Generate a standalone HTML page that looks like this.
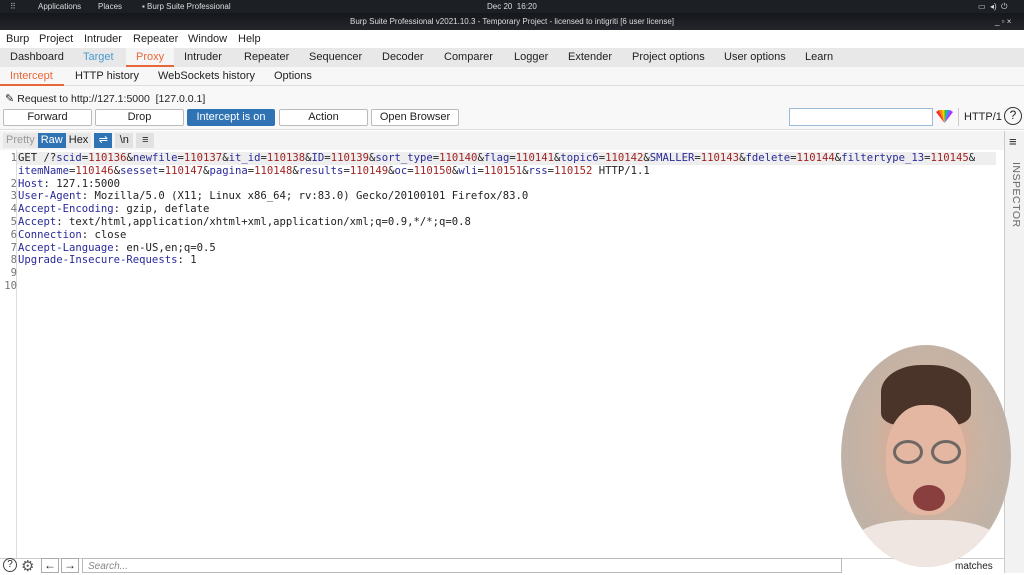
<!DOCTYPE html>
<html><head><style>
*{margin:0;padding:0;box-sizing:border-box}
body{width:1024px;height:573px;overflow:hidden;background:#fff;font-family:"Liberation Sans",sans-serif;position:relative;color:#222}
.a{position:absolute}
.top{left:0;top:0;width:1024px;height:13px;background:#1c1f24;color:#ddd;font-size:8px;line-height:13px}
.title{left:0;top:13px;width:1024px;height:17px;background:linear-gradient(#15171b,#23262b);color:#ddd;font-size:8px;line-height:17px;text-align:center}
.menu{top:31px;left:0;width:1024px;height:17px;font-size:11px;line-height:17px;background:#fff}
.menu span{position:absolute}
.tabs{top:48px;left:0;width:1024px;height:19px;background:#e8e8e8;font-size:11px;line-height:19px}
.tabs span{position:absolute}
.sub{top:67px;left:0;width:1024px;height:19px;background:#f7f7f7;font-size:11px;line-height:19px;border-bottom:1px solid #ddd}
.sub span{position:absolute}
.bar{top:86px;left:0;width:1024px;height:44px;background:#f8f8f8;border-bottom:1px solid #ddd}
.btn{position:absolute;top:109px;height:17px;border:1px solid #bbb;background:#fff;border-radius:2px;font-size:11px;line-height:15px;text-align:center}
pre{position:absolute;left:0;top:152px;font-family:"DejaVu Sans Mono",monospace;font-size:10.6px;line-height:12.8px;color:#222}
.n{color:#2a2a9a}.v{color:#a22222}.ln{color:#777;display:inline-block;width:18px;text-align:right;padding-right:1px}
</style></head><body>
<div class="a top"><span class="a" style="left:10px;color:#aaa">⠿</span><span class="a" style="left:38px">Applications</span><span class="a" style="left:98px">Places</span><span class="a" style="left:142px">▪ Burp Suite Professional</span><span class="a" style="left:487px">Dec 20&nbsp; 16:20</span><span class="a" style="left:978px">▭ &nbsp;◂) &nbsp;⏻</span></div>
<div class="a title">Burp Suite Professional v2021.10.3 - Temporary Project - licensed to intigriti [6 user license]<span class="a" style="left:995px">_ ▫ ×</span></div>
<div class="a menu"><span style="left:6px">Burp</span><span style="left:39px">Project</span><span style="left:84px">Intruder</span><span style="left:133px">Repeater</span><span style="left:188px">Window</span><span style="left:238px">Help</span></div>
<div class="a tabs"><span style="left:10px">Dashboard</span><span style="left:83px;color:#4a9ad0">Target</span><span style="left:126px;width:48px;height:19px;background:#f5f5f5;border-bottom:2px solid #e8673a;color:#e8673a;padding-left:10px">Proxy</span><span style="left:184px">Intruder</span><span style="left:244px">Repeater</span><span style="left:309px">Sequencer</span><span style="left:382px">Decoder</span><span style="left:444px">Comparer</span><span style="left:514px">Logger</span><span style="left:568px">Extender</span><span style="left:632px">Project options</span><span style="left:724px">User options</span><span style="left:805px">Learn</span></div>
<div class="a sub"><span style="left:0;width:64px;height:19px;border-bottom:2px solid #e8673a;color:#e8673a;padding-left:10px">Intercept</span><span style="left:75px">HTTP history</span><span style="left:158px">WebSockets history</span><span style="left:274px">Options</span></div>
<div class="a bar"></div>
<div class="a" style="left:5px;top:92px;font-size:11px">✎ <span style="font-size:10.5px">Request to http://127.1:5000&nbsp; [127.0.0.1]</span></div>
<div class="btn" style="left:3px;width:89px">Forward</div>
<div class="btn" style="left:95px;width:89px">Drop</div>
<div class="btn" style="left:187px;width:88px;background:#2f73b5;border-color:#2f73b5;color:#fff">Intercept is on</div>
<div class="btn" style="left:279px;width:89px">Action</div>
<div class="btn" style="left:371px;width:88px">Open Browser</div>
<div class="a" style="left:789px;top:108px;width:144px;height:18px;border:1px solid #9bbbd8;background:#fff"></div>
<svg class="a" style="left:936px;top:110px" width="17" height="14" viewBox="0 0 17 14">
<path d="M8.5 13 L0 2 L3 0 Z" fill="#e33"/><path d="M8.5 13 L3 0 L6 0 Z" fill="#f80"/><path d="M8.5 13 L6 0 L8.5 0 Z" fill="#fc0"/><path d="M8.5 13 L8.5 0 L11 0 Z" fill="#3b3"/><path d="M8.5 13 L11 0 L14 0 Z" fill="#29f"/><path d="M8.5 13 L14 0 L17 2 Z" fill="#a3f"/></svg>
<div class="a" style="left:958px;top:108px;height:18px;border-left:1px solid #ccc"></div>
<div class="a" style="left:964px;top:111px;font-size:11px">HTTP/1</div>
<div class="a" style="left:1004px;top:107px;width:18px;height:18px;border:1.5px solid #333;border-radius:50%;font-size:12px;text-align:center;line-height:15px">?</div>
<div class="a" style="left:0;top:131px;width:1004px;height:19px;background:#f4f4f4"></div>
<div class="a" style="left:3px;top:133px;font-size:11px;line-height:15px;display:flex;gap:0">
<span style="padding:0 3px;background:#e8e8e8;color:#999">Pretty</span><span style="padding:0 3px;background:#2f73b5;color:#fff">Raw</span><span style="padding:0 3px;background:#e8e8e8">Hex</span>
<span style="margin-left:3px;width:18px;background:#2f73b5;color:#fff;text-align:center">⇌</span><span style="margin-left:3px;width:18px;background:#e2e2e2;text-align:center">\n</span><span style="margin-left:3px;width:18px;background:#e2e2e2;text-align:center">≡</span></div>
<div class="a" style="left:16px;top:152px;width:980px;height:13px;background:#eee"></div>
<div class="a" style="left:16px;top:150px;height:410px;border-left:1px solid #ddd"></div>
<pre><span class="ln">1</span>GET /?<span class="n">scid</span>=<span class="v">110136</span>&amp;<span class="n">newfile</span>=<span class="v">110137</span>&amp;<span class="n">it_id</span>=<span class="v">110138</span>&amp;<span class="n">ID</span>=<span class="v">110139</span>&amp;<span class="n">sort_type</span>=<span class="v">110140</span>&amp;<span class="n">flag</span>=<span class="v">110141</span>&amp;<span class="n">topic6</span>=<span class="v">110142</span>&amp;<span class="n">SMALLER</span>=<span class="v">110143</span>&amp;<span class="n">fdelete</span>=<span class="v">110144</span>&amp;<span class="n">filtertype_13</span>=<span class="v">110145</span>&amp;
<span class="ln"></span><span class="n">itemName</span>=<span class="v">110146</span>&amp;<span class="n">sesset</span>=<span class="v">110147</span>&amp;<span class="n">pagina</span>=<span class="v">110148</span>&amp;<span class="n">results</span>=<span class="v">110149</span>&amp;<span class="n">oc</span>=<span class="v">110150</span>&amp;<span class="n">wli</span>=<span class="v">110151</span>&amp;<span class="n">rss</span>=<span class="v">110152</span> HTTP/1.1
<span class="ln">2</span><span class="n">Host</span>: 127.1:5000
<span class="ln">3</span><span class="n">User-Agent</span>: Mozilla/5.0 (X11; Linux x86_64; rv:83.0) Gecko/20100101 Firefox/83.0
<span class="ln">4</span><span class="n">Accept-Encoding</span>: gzip, deflate
<span class="ln">5</span><span class="n">Accept</span>: text/html,application/xhtml+xml,application/xml;q=0.9,*/*;q=0.8
<span class="ln">6</span><span class="n">Connection</span>: close
<span class="ln">7</span><span class="n">Accept-Language</span>: en-US,en;q=0.5
<span class="ln">8</span><span class="n">Upgrade-Insecure-Requests</span>: 1
<span class="ln">9</span>
<span class="ln">10</span></pre>
<div class="a" style="left:1004px;top:131px;width:20px;height:442px;background:#f2f2f2;border-left:1px solid #ccc"></div>
<div class="a" style="left:1009px;top:134px;font-size:13px">≡</div>
<div class="a" style="left:1008px;top:162px;width:14px;height:80px;writing-mode:vertical-rl;font-size:10.5px;color:#666;letter-spacing:0.5px">INSPECTOR</div>
<div class="a" style="left:0;top:558px;width:1004px;height:15px;background:#fff;border-top:1px solid #ccc"></div>
<div class="a" style="left:3px;top:558px;width:14px;height:14px;border:1.3px solid #444;border-radius:50%;font-size:10px;text-align:center;line-height:12px;background:#fff">?</div>
<div class="a" style="left:21px;top:557px;font-size:15px;color:#555">⚙</div>
<div class="a" style="left:41px;top:558px;width:18px;height:15px;border:1px solid #aaa;font-size:12px;text-align:center;line-height:13px">←</div>
<div class="a" style="left:61px;top:558px;width:18px;height:15px;border:1px solid #aaa;font-size:12px;text-align:center;line-height:13px">→</div>
<div class="a" style="left:82px;top:558px;width:760px;height:15px;border:1px solid #bbb;font-size:10px;font-style:italic;color:#888;padding-left:5px;line-height:15px">Search...</div>
<div class="a" style="left:955px;top:561px;font-size:10px">matches</div>
<div class="a" style="left:841px;top:345px;width:170px;height:222px;border-radius:50%;background:radial-gradient(ellipse at 50% 45%,#e7c4b0 0,#d8ac95 25%,#c9b3a3 45%,#bfb2a6 70%,#e6dcd6 100%);overflow:hidden">
<div class="a" style="left:40px;top:20px;width:90px;height:60px;border-radius:45% 45% 20% 20%;background:#4a3328"></div>
<div class="a" style="left:45px;top:60px;width:80px;height:110px;border-radius:45%;background:#e3b7a2"></div>
<div class="a" style="left:52px;top:95px;width:30px;height:24px;border:3px solid #6e6763;border-radius:50%"></div>
<div class="a" style="left:90px;top:95px;width:30px;height:24px;border:3px solid #6e6763;border-radius:50%"></div>
<div class="a" style="left:72px;top:140px;width:32px;height:26px;border-radius:50%;background:#8a3f3f"></div>
<div class="a" style="left:10px;top:175px;width:150px;height:60px;border-radius:40%;background:#efe6e2"></div>
</div>
</body></html>
